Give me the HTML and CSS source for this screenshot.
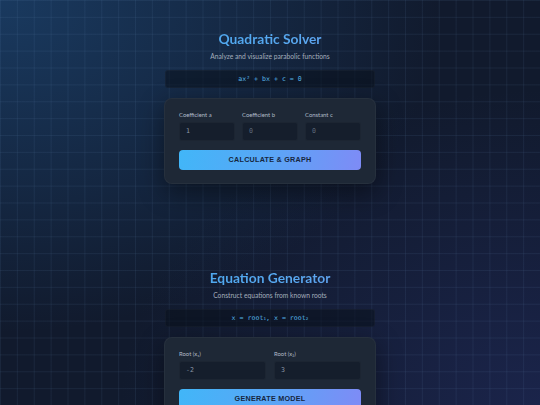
FILE: index.html
```html
<!DOCTYPE html>
<html lang="en">
<head>
<meta charset="utf-8">
<title>Quadratic Solver</title>
<link rel="stylesheet" href="styles.css">
</head>
<body>
<main class="page">
  <section class="tool">
    <h1 class="title">Quadratic Solver</h1>
    <p class="subtitle">Analyze and visualize parabolic functions</p>
    <div class="formula">ax² + bx + c = 0</div>
    <div class="card">
      <div class="fields three">
        <label class="field">
          <span class="label">Coefficient a</span>
          <span class="input strong">1</span>
        </label>
        <label class="field">
          <span class="label">Coefficient b</span>
          <span class="input">0</span>
        </label>
        <label class="field">
          <span class="label">Constant c</span>
          <span class="input">0</span>
        </label>
      </div>
      <button class="action">CALCULATE &amp; GRAPH</button>
    </div>
  </section>

  <section class="tool second">
    <h1 class="title">Equation Generator</h1>
    <p class="subtitle">Construct equations from known roots</p>
    <div class="formula">x = root<span class="sub">₁</span>, x = root<span class="sub">₂</span></div>
    <div class="card">
      <div class="fields two">
        <label class="field">
          <span class="label">Root (x₁)</span>
          <span class="input strong">-2</span>
        </label>
        <label class="field">
          <span class="label">Root (x₂)</span>
          <span class="input strong">3</span>
        </label>
      </div>
      <button class="action">GENERATE MODEL</button>
    </div>
  </section>
</main>
</body>
</html>
```

FILE: styles.css
```css
html, body {
  margin: 0;
  padding: 0;
  height: 100%;
}

body {
  font-family: Lato, "Noto Sans", sans-serif;
  color: #cbd5e1;
  background-color: #111a2d;
  background-image:
    linear-gradient(rgba(120, 160, 210, 0.09) 1px, transparent 1px),
    linear-gradient(90deg, rgba(120, 160, 210, 0.09) 1px, transparent 1px),
    radial-gradient(ellipse at 0% 0%, rgba(28, 68, 112, 0.75) 0%, rgba(28, 68, 112, 0) 58%),
    radial-gradient(ellipse at 100% 100%, rgba(40, 50, 115, 0.42) 0%, rgba(40, 50, 115, 0) 55%);
  background-size: 16.875px 16.875px, 16.875px 16.875px, 100% 100%, 100% 100%;
  background-repeat: repeat, repeat, no-repeat, no-repeat;
  overflow: hidden;
}

.page {
  width: 212px;
  margin: 0 auto;
  padding-top: 29.5px;
  display: flex;
  flex-direction: column;
}

.tool {
  display: flex;
  flex-direction: column;
  align-items: stretch;
}

.second {
  margin-top: 85px;
}

.title {
  margin: 0;
  text-align: center;
  font-size: 13.8px;
  line-height: 17px;
  font-weight: 700;
  background: linear-gradient(90deg, #4aa8ee 0%, #58a8f0 60%, #68a0f0 100%);
  -webkit-background-clip: text;
  background-clip: text;
  color: transparent;
}

.subtitle {
  margin: 5px 0 0;
  text-align: center;
  font-size: 6.7px;
  line-height: 8px;
  color: #a3adbb;
}

.formula {
  margin-top: 10.5px;
  height: 18px;
  margin-left: 1px;
  margin-right: 1px;
  border-radius: 3px;
  background: rgba(10, 16, 28, 0.55);
  border: 1px solid rgba(255, 255, 255, 0.03);
  box-sizing: border-box;
  display: flex;
  align-items: center;
  justify-content: center;
  font-family: "DejaVu Sans Mono", "Liberation Mono", monospace;
  font-size: 6.6px;
  color: #56b4e6;
  white-space: pre;
}

.sub {
  font-family: "DejaVu Sans", sans-serif;
}

.card {
  margin-top: 9.5px;
  padding: 12px 14px 13px;
  border-radius: 8px;
  background: #1e2836;
  border: 1px solid rgba(255, 255, 255, 0.04);
  box-shadow: 0 8px 26px rgba(0, 0, 0, 0.45);
  display: flex;
  flex-direction: column;
  gap: 9px;
}

.fields {
  display: grid;
  gap: 7px;
}

.three {
  grid-template-columns: repeat(3, 1fr);
}

.two {
  grid-template-columns: repeat(2, 1fr);
  gap: 8px;
}

.field {
  display: flex;
  flex-direction: column;
  gap: 4px;
}

.label {
  font-size: 5.9px;
  line-height: 7px;
  color: #b0bac7;
}

.input {
  height: 19px;
  box-sizing: border-box;
  border-radius: 3px;
  background: #151e2c;
  border: 1px solid rgba(255, 255, 255, 0.03);
  padding-left: 6px;
  display: flex;
  align-items: center;
  font-family: "DejaVu Sans Mono", "Liberation Mono", monospace;
  font-size: 6.6px;
  color: #5f6b7c;
}

.input.strong {
  color: #8b96a6;
}

.action {
  height: 20px;
  border: 0;
  border-radius: 4px;
  padding: 0;
  background: linear-gradient(100deg, #41b6f8 0%, #5aa6f6 50%, #7e8bf6 100%);
  font-family: "Liberation Sans", Arial, sans-serif;
  font-weight: 700;
  font-size: 7.2px;
  letter-spacing: 0.25px;
  color: #15263e;
}
```
